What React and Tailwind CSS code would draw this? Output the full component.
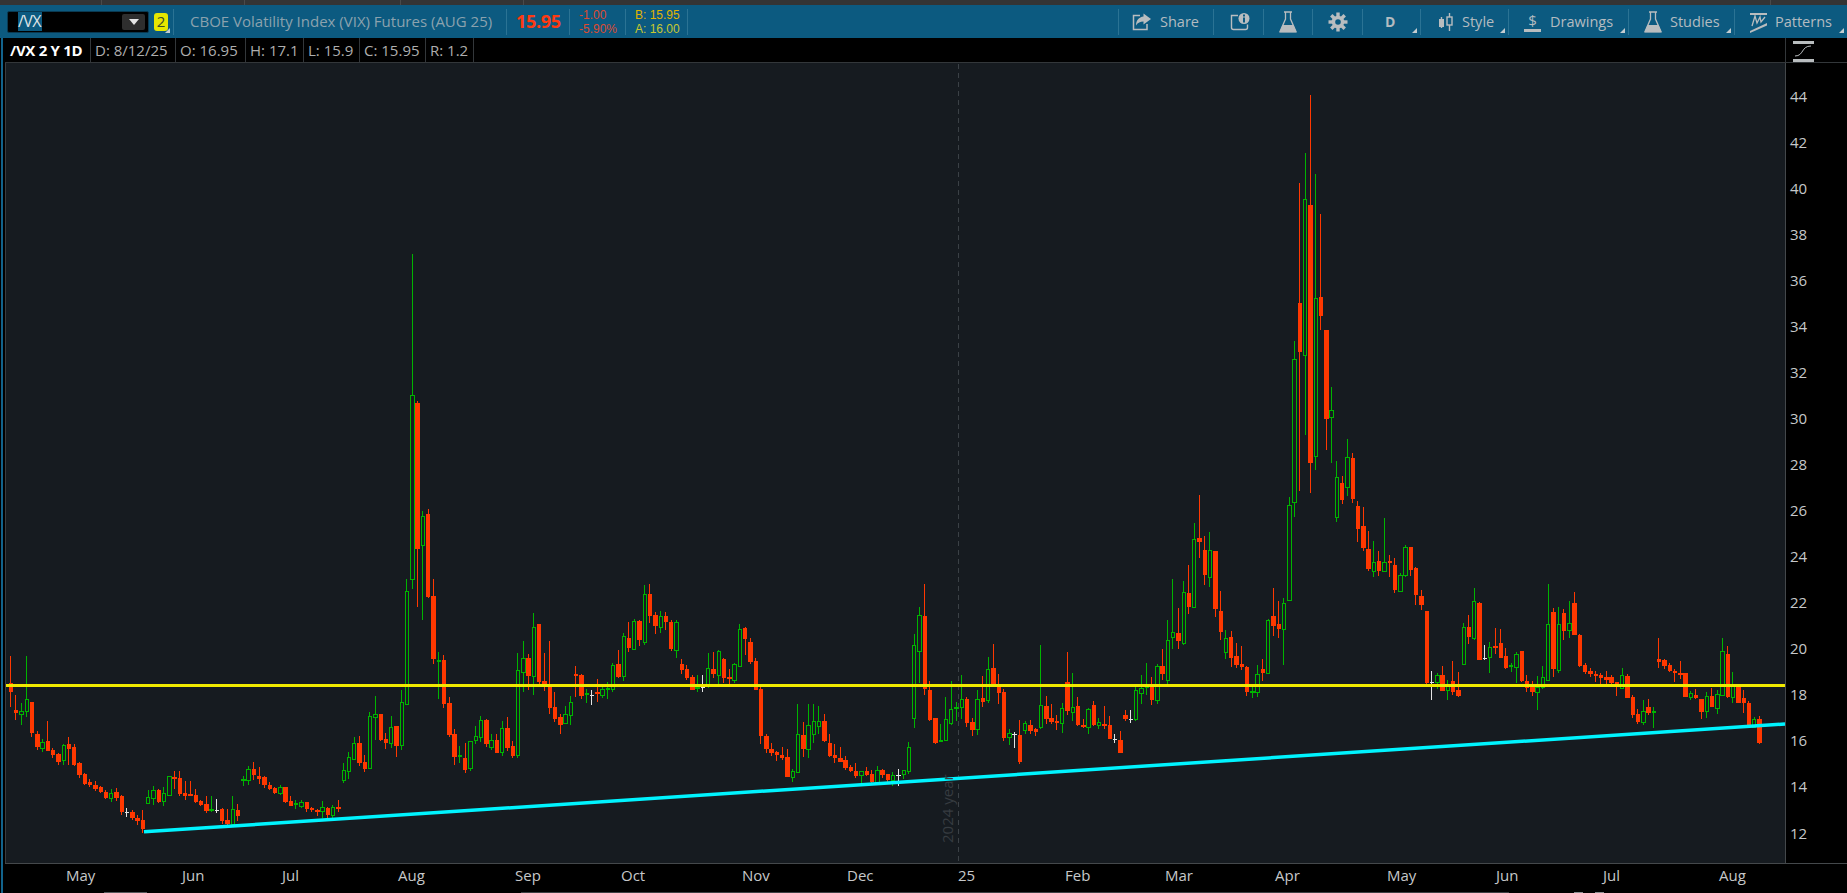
const RED = "#ff3800";
const GREEN = "#00b400";
const WHITE = "#e4e4e4";

// candles read off the chart, one block per crop: y is page y = top + value / 3
const BLOCKS = [
  [600, "r 168 250 275 320,r 285 331 339 359,g 308 332 341 375,g 168 298 332 351,r 306 306 398 410,r 393 402 440 449,g 418 427 443 455,r 363 423 453 453,r 445 450 464 473,r 458 462 486 495,g 432 436 479 495,r 411 432 447 495,r 432 441 495 497,r 487 489 525 533,r 520 522 552 556,r 537 546 555 560,r 543 555 567 572,r 558 561 575 579,r 570 576 594 597,g 567 580 593 605,r 564 576 594 602,r 585 588 636 645,w 624 637 637 651,r 630 637 654 659,r 645 654 663 675,r 630 660 687 698,g 570 592 608 611,g 558 571 593 614,r 566 570 606 608,g 561 580 602 618,g 528 529 584 584,r 513 531 537 567,r 513 534 582 588,r 543 579 587 599,r 543 582 587 588,r 567 586 606 608,r 600 603 615 618,r 588 612 633 639,g 588 628 632 636,w 597 631 631 639,r 624 627 663 672,r 627 660 672 676,g 588 628 671 675,r 612 630 648 663,g 528 538 542 558,g 498 508 541 555,r 486 507 525 540,r 501 528 537 552,r 528 531 555 564,r 546 555 567 570,r 561 565 579 582,g 555 561 579 585,r 561 561 606 609,r 588 603 618 618,g 600 610 613 627,g 600 607 618 624,r 606 606 627 636,r 621 625 630 636,r 627 630 636 648,g 603 622 632 654,r 621 624 645 654,g 615 622 644 654,r 600 621 627 636,g 489 511 541 549,g 456 472 513 537,g 411 430 477 480,r 408 429 489 498,r 465 486 507 516,g 336 348 504 507"],
  [570, "g 378 433 442 510,r 432 432 510 513,r 489 507 518 537,g 438 472 518 533,r 468 468 528 561,g 360 397 524 540,g 27 64 401 401"],
  [240, "g 42 466 1018 1046,r 483 489 926 1100,g 812 828 916 1140,r 806 822 1071 1075,r 1017 1068 1256 1272,g 1236 1261 1265 1377"],
  [570, "r 255 270 402 414,r 381 399 495 501,r 477 492 561 585,g 528 556 560 579,r 519 564 600 609,g 513 514 594 603,g 468 499 509 522,g 438 451 500 516,r 447 450 522 531,g 492 511 530 540,r 492 510 549 549,g 453 475 545 558,r 441 474 534 543,r 513 528 558 564,g 249 301 554 564,g 213 265 305 366,r 252 264 318 360,g 129 172 317 375,r 162 162 336 342,r 249 333 345 363,r 213 345 414 432,r 366 411 447 456,r 432 441 465 492,g 408 433 458 458,g 378 397 434 465,r 288 312 318 381,r 312 315 378 387,g 357 370 374 399,w 360 376 376 405,r 327 366 372 396,g 348 358 374 384,g 336 355 359 387,g 279 286 356 366,r 240 282 321 324,g 189 199 317 333,r 156 204 234 246,g 147 153 236 240,r 150 153 210 228,g 45 72 215 225,r 42 72 138 159,r 126 135 168 192,g 123 138 171 189,r 126 138 156 180,r 150 156 237 243,g 150 156 239 264,r 267 282 300 312,r 285 297 324 330,r 315 321 360 360,g 315 352 357 366,w 315 352 352 366,g 249 295 345 354,r 246 297 312 324,g 240 244 315 345,r 264 267 324 339,r 297 321 327 345,g 279 283 330 339,g 162 178 287 287"],
  [570, "r 171 174 207 255,r 204 216 276 282,r 264 273 360 360,r 351 357 498 522,r 492 498 537 549,r 519 537 549 558,r 543 546 555 573,r 531 555 564 570,r 537 561 621 621,g 597 604 620 636,g 402 493 607 607,r 456 495 537 561,g 402 466 536 564,g 402 454 491 519,g 408 454 467 492,r 432 453 513 516,r 492 519 558 561,r 522 555 564 579,r 531 564 576 576,r 558 570 594 600,r 585 591 603 606,r 579 603 618 624,g 603 604 614 639,r 591 603 615 618,r 600 612 636 639,g 588 601 637 639,r 597 600 615 624,r 612 612 630 636,g 606 616 629 648,w 597 615 615 648,g 600 601 611 627,g 516 532 602 612,g 192 226 445 474,g 111 136 242 339,r 42 138 357 375,r 333 360 450 453,r 444 444 519 522,g 462 511 515 516,g 381 448 509 512,g 333 418 458 465,g 396 412 418 453,g 315 388 410 447,r 381 387 459 471,r 444 456 480 498,g 360 388 476 495,r 318 384 396 411,g 261 298 389 399,r 222 294 345 348,r 312 345 369 402,r 357 366 504 513,g 477 490 502 525,w 486 492 492 534,r 450 495 576 582,g 453 460 479 492,r 450 465 484 492,r 474 477 486 498,g 225 406 472 477,r 378 408 447 462,r 402 444 456 462,r 435 453 459 480,g 399 415 458 489,r 246 336 423 435,g 309 412 425 453,r 381 408 465 468,r 447 465 471 474,g 414 418 470 492,r 393 405 465 468,g 444 457 464 477,r 408 462 468 477,r 438 465 507 507"],
  [480, "w 762 777 777 789,r 753 780 819 819,r 690 705 717 723,w 690 718 718 729,g 618 631 718 723,g 585 623 638 672,g 549 617 623 645,r 591 618 660 675,g 552 558 660 672,r 507 558 582 600,g 420 481 599 612,g 297 457 472 507,r 384 459 483 507,g 303 337 488 495,r 255 339 381 402,g 129 178 380 380,r 45 174 186 234,r 168 210 285 315,g 156 210 290 321,r 213 213 387 411,r 333 393 456 480,g 450 475 515 537,r 453 471 534 561,r 489 528 555 564,r 498 552 561 570,r 558 561 636 648,g 618 634 638 654,g 555 583 635 651,r 537 567 579 603,g 417 420 578 578,r 324 408 438 468,r 363 432 447 474,g 354 370 446 555,g 51 76 359 363"],
  [80, "g 783 838 1265 1311,r 309 669 816 1233,g 219 358 824 1065,r 45 375 1148 1239,g 282 655 1127 1170,r 402 651 708 750,r 750 750 1017 1110,g 921 991 1010 1149,g 1143 1192 1310 1326,r 1188 1209 1260 1272,g 1077 1132 1220 1248,r 1119 1134 1257 1269,r 1263 1278 1347 1386,r 1281 1338 1404 1413,r 1353 1407 1467 1473,g 1383 1447 1472 1491,r 1413 1443 1473 1488,g 1314 1447 1472 1476,r 1425 1443 1449 1491"],
  [480, "r 234 255 330 339,g 279 286 333 336,g 195 202 285 291,r 201 201 270 288,r 261 264 345 375,r 330 348 375 390,r 393 393 609 612,w 573 605 605 660,g 579 586 606 627,r 558 585 633 633,g 600 615 629 660,r 543 603 636 645,r 576 630 648 651,g 430 442 551 551,r 405 441 471 492,g 324 364 473 480,r 366 369 540 540"],
  [560, "w 255 293 293 300,g 246 262 292 339,r 204 258 264 282,r 207 249 294 294,r 264 288 324 327,g 309 315 319 336,g 276 282 320 369,r 273 273 363 366,r 345 363 384 396,r 363 372 396 408,g 348 380 395 450,g 318 351 381 387,g 72 192 359 363,r 144 156 327 351,g 141 192 329 339,r 147 159 213 240,g 123 189 209 234,r 96 129 225 225,r 222 225 318 321,r 309 315 336 342,r 324 333 342 351,r 333 342 348 366,r 339 345 354 372,r 333 351 360 372,r 345 351 369 372,r 366 366 380 408,g 324 345 383 384,r 342 348 414 414,r 405 411 465 474,r 447 462 486 492,g 420 454 485 495,r 417 441 459 465,g 441 454 458 504,r 234 297 306 324,r 297 300 318 327,r 309 315 333 336,r 327 333 339 366,r 303 339 345 357,r 339 339 411 411,g 393 400 410 420,r 387 405 414 417,r 417 417 456 477,g 396 409 452 474,r 384 408 441 441,g 390 403 443 462,g 234 274 404 408,r 258 282 411 414,g 336 378 410 429,r 375 381 429 429,r 390 414 429 459,r 423 429 498 498,g 471 477 500 504,r 468 477 549 552"],
];

const CANDLES = BLOCKS.flatMap(([top, text]) =>
  text.split(",").map((item) => {
    const [type, ...vals] = item.split(" ");
    const [high, open, close, low] = vals.map((v) => Math.round(top + Number(v) / 3));
    return { type, high, open, close, low };
  })
);

const PRICES = [44, 42, 40, 38, 36, 34, 32, 30, 28, 26, 24, 22, 20, 18, 16, 14, 12];

const MONTHS = [
  ["May", "w-[116px]"],
  ["Jun", "w-[100px]"],
  ["Jul", "w-[116px]"],
  ["Aug", "w-[117px]"],
  ["Sep", "w-[106px]"],
  ["Oct", "w-[121px]"],
  ["Nov", "w-[105px]"],
  ["Dec", "w-[111px]"],
  ["25", "w-[107px]"],
  ["Feb", "w-[100px]"],
  ["Mar", "w-[110px]"],
  ["Apr", "w-[112px]"],
  ["May", "w-[109px]"],
  ["Jun", "w-[107px]"],
  ["Jul", "w-[116px]"],
  ["Aug", "w-[60px]"],
];

const INFO = [
  ["D: 8/12/25", "w-[85px]"],
  ["O: 16.95", "w-[70px]"],
  ["H: 17.1", "w-[58px]"],
  ["L: 15.9", "w-[56px]"],
  ["C: 15.95", "w-[66px]"],
  ["R: 1.2", "w-[48px]"],
];

function Candle({ c, i }) {
  const mid = 10.7 + i * 5.283;
  const wick = Math.floor(mid);
  const left = Math.round(mid - 2);
  const right = Math.round(mid + 2.4);
  const width = right - left;
  const height = c.close - c.open;

  if (c.type === "w") {
    return (
      <g fill={WHITE}>
        <rect x={wick} y={c.high} width="1" height={c.low - c.high} />
        <rect x={left} y={c.open} width={width} height="1" />
      </g>
    );
  }
  if (c.type === "r") {
    return (
      <g fill={RED}>
        <rect x={wick} y={c.high} width="1" height={c.low - c.high} />
        <rect x={left} y={c.open} width={width} height={Math.max(height, 2)} />
      </g>
    );
  }
  return (
    <g>
      <rect x={wick} y={c.high} width="1" height={c.open - c.high} fill={GREEN} />
      <rect x={wick} y={c.close} width="1" height={c.low - c.close} fill={GREEN} />
      {height <= 2 ? (
        <rect x={left} y={c.open} width={width} height="2" fill={GREEN} />
      ) : (
        <rect x={left + 0.5} y={c.open + 0.5} width={width - 1} height={height} fill="none" stroke={GREEN} />
      )}
    </g>
  );
}

function Chart() {
  return (
    <svg width="1780" height="800" viewBox="5 63 1780 800" shapeRendering="crispEdges" className="block shrink-0">
      <line x1="958.5" y1="64" x2="958.5" y2="863" stroke="#3b4146" strokeDasharray="5 4" />
      {CANDLES.map((c, i) => (
        <Candle key={i} c={c} i={i} />
      ))}
      <rect x="6" y="684" width="1779" height="3" fill="#f0e900" />
      <line x1="144" y1="831.8" x2="1785" y2="724" stroke="#00f4ff" strokeWidth="3.5" shapeRendering="auto" />
      <text
        x="0"
        y="0"
        transform="translate(953 843) rotate(-90)"
        fill="#363c41"
        fontSize="15"
        fontFamily="'Open Sans', sans-serif"
        shapeRendering="auto"
      >
        2024 year
      </text>
    </svg>
  );
}

function Corner() {
  return (
    <svg width="5" height="5" viewBox="0 0 5 5" className="absolute right-[3px] bottom-[2px]">
      <path d="M5 0v5H0z" fill="#c4ccd0" />
    </svg>
  );
}

function Cell({ className, children, corner }) {
  return (
    <div className={`relative flex items-center shrink-0 h-[26px] border-r border-[#2b7394] ${className}`}>
      {children}
      {corner && <Corner />}
    </div>
  );
}

function ShareIcon() {
  return (
    <svg width="20" height="19" viewBox="0 0 20 19" className="shrink-0">
      <path d="M8 3.5H1.5v14h13.5V12" fill="none" stroke="#b9bdbf" strokeWidth="1.5" />
      <path d="M11.5 1.5l7.5 5.5-7.5 5.5V9.5c-3.5 0-5.5 1-7.5 4 0-5 3-8.5 7.5-9z" fill="#b9bdbf" />
    </svg>
  );
}

function InfoIcon() {
  return (
    <svg width="20" height="19" viewBox="0 0 20 19" className="shrink-0">
      <path d="M8 3.5H1.5v12q0 2 2 2h12q2 0 2-2v-3" fill="none" stroke="#b9bdbf" strokeWidth="1.4" />
      <circle cx="14" cy="6.5" r="5.5" fill="#b9bdbf" />
      <rect x="13" y="2.5" width="2" height="2" fill="#0c5a80" />
      <rect x="13" y="5.5" width="2" height="5" fill="#0c5a80" />
    </svg>
  );
}

function FlaskIcon() {
  return (
    <svg width="18" height="22" viewBox="0 0 18 22" className="shrink-0">
      <path d="M5 1h8M6.5 1v7L1 20.5h16L11.5 8V1" fill="none" stroke="#b9bdbf" strokeWidth="1.3" />
      <path d="M3.5 14h11l3 7.5H.5z" fill="#b9bdbf" />
    </svg>
  );
}

function GearIcon() {
  return (
    <svg width="20" height="20" viewBox="0 0 20 20" className="shrink-0">
      {[0, 45, 90, 135].map((a) => (
        <rect key={a} x="8.3" y="0.5" width="3.4" height="19" fill="#b9bdbf" transform={`rotate(${a} 10 10)`} />
      ))}
      <circle cx="10" cy="10" r="6.3" fill="#b9bdbf" />
      <circle cx="10" cy="10" r="2.8" fill="#0c5a80" />
    </svg>
  );
}

function StyleIcon() {
  return (
    <svg width="16" height="20" viewBox="0 0 16 20" className="shrink-0">
      <path d="M3.5 5v11M11.5 1v18" stroke="#b9bdbf" strokeWidth="1.4" />
      <rect x="1" y="7" width="5" height="8" fill="#b9bdbf" />
      <rect x="9" y="5" width="5" height="8" fill="#0c5a80" stroke="#b9bdbf" strokeWidth="1.4" />
    </svg>
  );
}

function PatternIcon() {
  return (
    <svg width="19" height="22" viewBox="0 0 19 22" className="shrink-0">
      <path d="M1 2h17v2H1z" fill="#b9bdbf" />
      <path d="M3 15L6 5l2 7 3-6 1 5 4-5" fill="none" stroke="#b9bdbf" strokeWidth="1.3" />
      <path d="M1 20l17-8v2.5L1 22z" fill="#b9bdbf" />
    </svg>
  );
}

function Header() {
  return (
    <div className="flex items-center shrink-0 h-[33px] bg-[#0c5a80] text-[14.5px] text-[#b4bcc0]">
      <Cell className="w-[174px] pl-[7px]" corner>
        <div className="flex items-center w-[142px] h-[22px] bg-black border border-[#0a3a52] rounded-[2px] pl-[10px]">
          <span className="bg-[#0c5a80] text-[#dde3e6] text-[16px] leading-[19px] tracking-[-0.6px] w-[24px]">/VX</span>
          <div className="ml-auto mr-[3px] flex items-center justify-center w-[23px] h-[16px] bg-[#2e2e2e] rounded-[2px]">
            <svg width="10" height="6" viewBox="0 0 10 6">
              <path d="M0 0h10L5 6z" fill="#e6e6e6" />
            </svg>
          </div>
        </div>
        <div className="ml-[5px] flex items-center justify-center w-[14px] h-[18px] bg-[#e6e600] rounded-[3px] text-[#3a4a2a] text-[15px]">
          2
        </div>
      </Cell>
      <Cell className="w-[333px] pl-[16px]">
        <span className="text-[#8ba2ae] text-[15px] whitespace-nowrap">CBOE Volatility Index (VIX) Futures (AUG 25)</span>
      </Cell>
      <Cell className="w-[63px] pl-[9px]">
        <span className="text-[#ff3a12] text-[18px] font-bold tracking-[-0.3px]">15.95</span>
      </Cell>
      <Cell className="w-[56px] pl-[9px]">
        <div className="text-[#dd4a30] text-[12px] leading-[14px] whitespace-nowrap font-['Liberation_Sans',sans-serif]">
          <div>-1.00</div>
          <div>-5.90%</div>
        </div>
      </Cell>
      <Cell className="w-[62px] pl-[9px]">
        <div className="text-[12px] leading-[14px] whitespace-nowrap font-['Liberation_Sans',sans-serif]">
          <div className="text-[#e0b400]">B: 15.95</div>
          <div className="text-[#c8c830]">A: 16.00</div>
        </div>
      </Cell>
      <Cell className="w-[431px]" />
      <Cell className="w-[95px] pl-[13px] gap-[8px]">
        <ShareIcon />
        <span>Share</span>
      </Cell>
      <Cell className="w-[50px] pl-[16px]">
        <InfoIcon />
      </Cell>
      <Cell className="w-[49px] pl-[15px]">
        <FlaskIcon />
      </Cell>
      <Cell className="w-[50px] pl-[15px]">
        <GearIcon />
      </Cell>
      <Cell className="w-[58px] pl-[22px]" corner>
        <span className="text-[14px] font-bold">D</span>
      </Cell>
      <Cell className="w-[88px] pl-[17px] gap-[8px]" corner>
        <StyleIcon />
        <span>Style</span>
      </Cell>
      <Cell className="w-[120px] pl-[15px] gap-[9px]" corner>
        <span className="w-[17px] text-center text-[15px] leading-[17px] border-b-[3px] border-[#b9bdbf]">$</span>
        <span>Drawings</span>
      </Cell>
      <Cell className="w-[106px] pl-[15px] gap-[8px]" corner>
        <FlaskIcon />
        <span>Studies</span>
      </Cell>
      <div className="relative flex items-center h-[26px] flex-1 pl-[14px] gap-[7px]">
        <PatternIcon />
        <span>Patterns</span>
        <Corner />
      </div>
    </div>
  );
}

function InfoBar() {
  return (
    <div className="flex items-center shrink-0 h-[25px] border-b border-[#33373a] bg-black text-[15px] text-[#aeaeae]">
      <div className="flex items-center h-full w-[86px] pl-[5px] border-r border-[#33373a] text-white font-bold text-[15px] tracking-[-0.3px] whitespace-nowrap">
        /VX 2 Y 1D
      </div>
      {INFO.map(([text, width]) => (
        <div key={text} className={`flex items-center h-full pl-[4px] border-r border-[#33373a] whitespace-nowrap ${width}`}>
          {text}
        </div>
      ))}
      <div className="flex-1 h-full" />
      <div className="flex items-center h-full w-[62px] pl-[6px] pt-[2px] border-l border-[#33373a]">
        <svg width="22" height="22" viewBox="0 0 22 22">
          <path d="M1 1h21v3H1zM1 19h21v3H1z" fill="#b9bdbf" />
          <path d="M3 16c9 0 6-10 16-10" fill="none" stroke="#b9bdbf" strokeWidth="1" />
        </svg>
      </div>
    </div>
  );
}

export default function App() {
  return (
    <div
      className="flex flex-col w-[1847px] h-[893px] overflow-hidden bg-black"
      style={{ fontFamily: "'Open Sans', 'Liberation Sans', sans-serif" }}
    >
      <div className="flex shrink-0 h-[5px] bg-[#343434]">
        <div className="w-[102px] border-r border-[#4a4a4a]" />
        <div className="w-[143px] border-r border-[#4a4a4a]" />
        <div className="w-[156px] border-r border-[#4a4a4a]" />
        <div className="w-[123px] border-r border-[#4a4a4a]" />
        <div className="flex-1" />
        <div className="w-[77px] border-l border-[#4a4a4a]" />
      </div>
      <Header />
      <div className="flex flex-1 min-h-0">
        <div className="shrink-0 w-[5px] pl-[1px] bg-black">
          <div className="w-[2px] h-full bg-[#12638c]" />
        </div>
        <div className="flex flex-col flex-1 min-w-0">
          <InfoBar />
          <div className="flex shrink-0 h-[800px]">
            <div className="shrink-0 bg-[#161b20] border-l border-[#3a3e42]">
              <div className="-ml-px">
                <Chart />
              </div>
            </div>
            <div className="flex flex-col flex-1 pt-[10px] pl-[4px] bg-black border-l border-[#44484b] text-[15px] text-[#c6c8ca]">
              {PRICES.map((p) => (
                <div key={p} className="flex items-center h-[46.06px] shrink-0">
                  {p}
                </div>
              ))}
            </div>
          </div>
          <div className="flex items-center shrink-0 h-[29px] pl-[61px] pb-[5px] border-t border-[#44484b] bg-black text-[15px] text-[#c6c8ca]">
            {MONTHS.map(([name, width], i) => (
              <div key={i} className={`shrink-0 ${width}`}>
                {name}
              </div>
            ))}
          </div>
          <div className="flex shrink-0 h-px">
            <div className="w-[99px]" />
            <div className="w-[43px] bg-[#55595c]" />
            <div className="w-[374px]" />
            <div className="w-[988px] bg-[#3c4043]" />
            <div className="w-[65px]" />
            <div className="w-[9px] bg-[#8a8e90]" />
            <div className="w-[12px]" />
            <div className="w-[9px] bg-[#8a8e90]" />
          </div>
        </div>
      </div>
    </div>
  );
}
